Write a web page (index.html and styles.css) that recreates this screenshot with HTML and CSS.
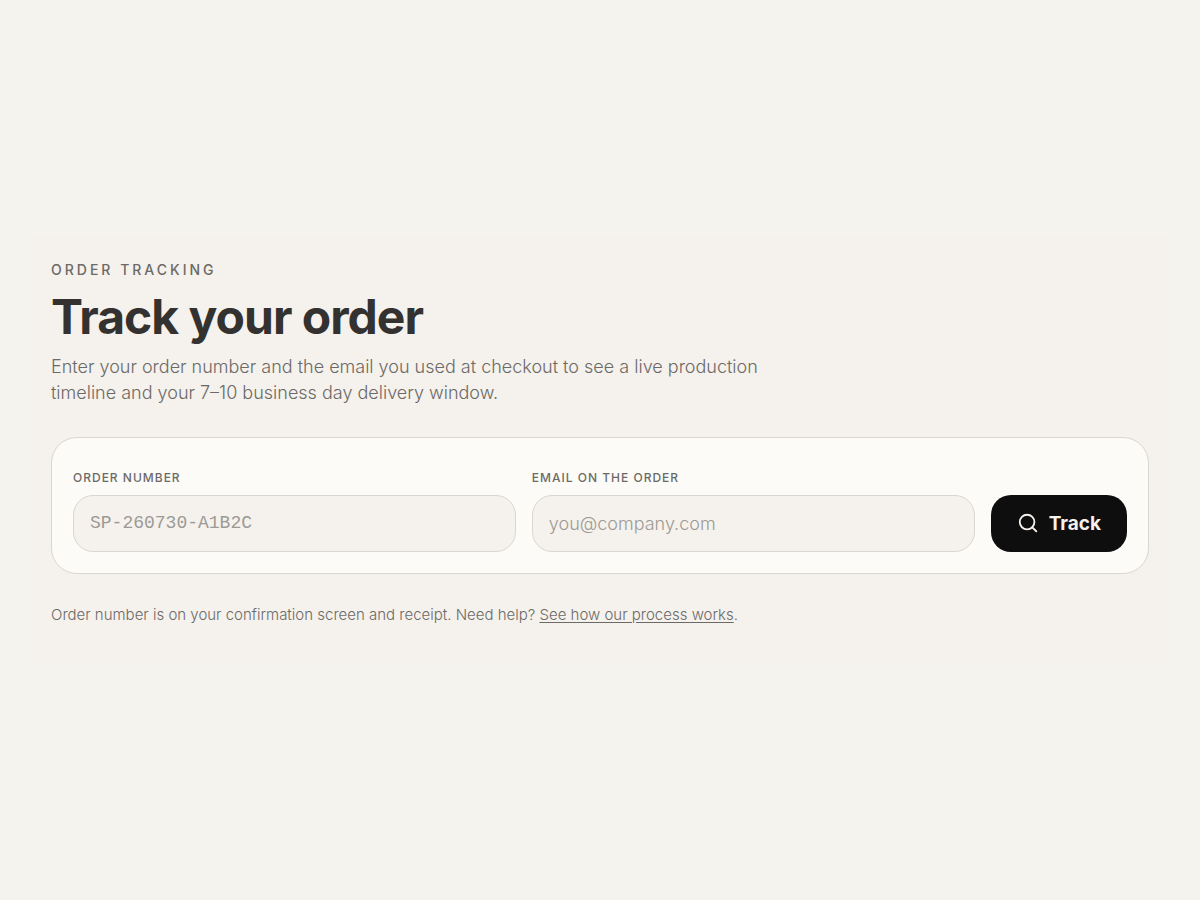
FILE: index.html
```html
<!DOCTYPE html>
<html lang="en">
<head>
  <meta charset="UTF-8">
  <meta name="viewport" content="width=device-width, initial-scale=1.0">
  <title>Track your order</title>
  <link rel="stylesheet" href="styles.css">
</head>
<body>
  <main class="tracking">
    <p class="eyebrow">Order tracking</p>
    <h1>Track your order</h1>
    <p class="intro">Enter your order number and the email you used at checkout to see a live production timeline and your 7–10 business day delivery window.</p>

    <form class="track-form">
      <div class="field">
        <label for="order-number">Order number</label>
        <input class="order-input" type="text" id="order-number" name="order" placeholder="SP-260730-A1B2C">
      </div>
      <div class="field">
        <label for="order-email">Email on the order</label>
        <input type="email" id="order-email" name="email" placeholder="you@company.com">
      </div>
      <button type="submit" class="track-button">
        <svg width="22" height="22" viewBox="0 0 24 24" fill="none" stroke="currentColor" stroke-width="2" stroke-linecap="round" stroke-linejoin="round" aria-hidden="true">
          <circle cx="11" cy="11" r="8"/>
          <path d="M21 21l-4.3-4.3"/>
        </svg>
        Track
      </button>
    </form>

    <p class="help">Order number is on your confirmation screen and receipt. Need help? <a href="#process">See how our process works</a>.</p>
  </main>
</body>
</html>
```
FILE: styles.css
```css
* {
  box-sizing: border-box;
}
body {
  display: flex;
  align-items: center;
  min-height: 100vh;
  margin: 0;
  padding: 31px;
  background-color: #f4f3ee;
  color: #6b6a67;
  font-family: Inter, sans-serif;
}
.tracking {
  flex: 1;
  padding: 23px 20px 38px;
  background-color: #f5f1ec;
}
.eyebrow {
  margin: 0;
  font-size: 14px;
  font-weight: 500;
  line-height: 20px;
  letter-spacing: 3px;
  text-transform: uppercase;
}
h1 {
  margin: 9px 0;
  color: #343230;
  font-size: 48px;
  font-weight: 700;
  line-height: 56px;
  letter-spacing: -1px;
}
.intro {
  max-width: 720px;
  margin: 0 0 31px;
  font-size: 18px;
  font-weight: 300;
  line-height: 26px;
}
.track-form {
  display: flex;
  align-items: flex-end;
  gap: 16px;
  padding: 30px 21px 21px;
  background-color: #fcfbf7;
  border: 1px solid #d9d7d2;
  border-radius: 26px;
}
.field {
  flex: 1;
}
.field label {
  display: block;
  margin-bottom: 7px;
  font-size: 12px;
  font-weight: 500;
  line-height: 20px;
  letter-spacing: 1px;
  text-transform: uppercase;
}
.field input {
  display: block;
  width: 100%;
  height: 57px;
  padding: 0 16px;
  background-color: #f5f1ec;
  border: 1px solid #d9d7d2;
  border-radius: 20px;
  color: #343230;
  font-family: inherit;
  font-size: 18px;
  font-weight: 300;
}
.field .order-input {
  font-family: "Liberation Mono", monospace;
}
.field input::placeholder {
  color: #9c9a96;
}
.track-button {
  display: flex;
  align-items: center;
  gap: 10px;
  height: 57px;
  padding: 0 26px;
  background-color: #0e0e0e;
  border: 0;
  border-radius: 20px;
  color: #f5f1ec;
  font-family: inherit;
  font-size: 19px;
  font-weight: 700;
  cursor: pointer;
}
.help {
  margin: 30px 0 0;
  font-size: 15px;
  font-weight: 300;
  line-height: 22px;
}
.help a {
  color: inherit;
  text-underline-offset: 2px;
}
```
